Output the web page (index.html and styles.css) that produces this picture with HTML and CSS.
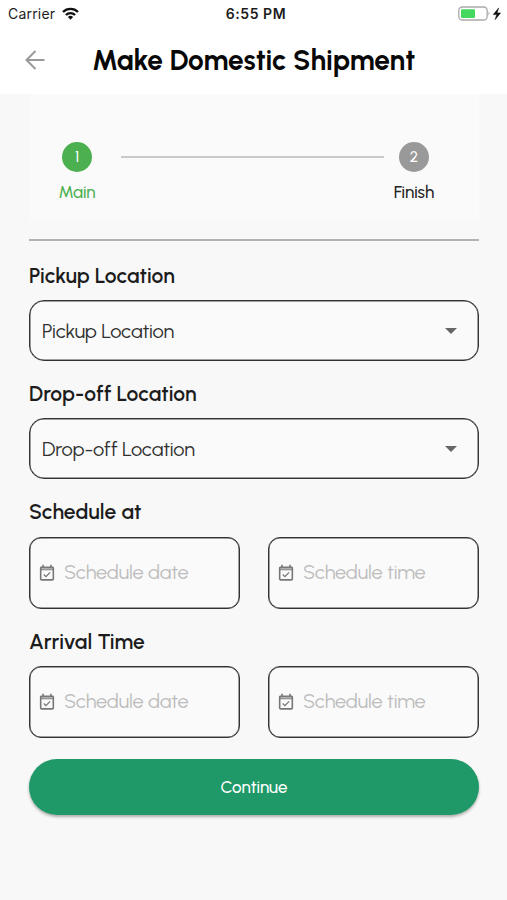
FILE: index.html
```html
<!DOCTYPE html>
<html lang="en">
<head>
<meta charset="utf-8">
<title>Make Domestic Shipment</title>
<link rel="stylesheet" href="styles.css">
</head>
<body>
<svg class="defs" width="0" height="0" aria-hidden="true">
  <symbol id="calendar" viewBox="0 0 24 24"><path fill="currentColor" d="M16.53 11.06 15.47 10l-4.88 4.88-2.12-2.12-1.06 1.06L10.59 17l5.94-5.94zM19 3h-1V1h-2v2H8V1H6v2H5c-1.11 0-1.99.9-1.99 2L3 19c0 1.1.89 2 2 2h14c1.1 0 2-.9 2-2V5c0-1.1-.9-2-2-2zm0 16H5V8h14v11z"/><path fill="#fafafa" fill-opacity=".45" d="M5 5h14v2H5z"/></symbol>
</svg>
<div class="status">
  <div class="carrier"><span>Carrier</span>
    <svg width="17" height="13" viewBox="0 0 17 13"><g fill="none" stroke="#111" stroke-width="2.4"><path d="M1 5a10.6 10.6 0 0 1 15 0"/><path d="M3.9 8a6.6 6.6 0 0 1 9.2 0"/></g><path fill="#111" d="M8.5 12.7 5.9 10.1a3.7 3.7 0 0 1 5.2 0z"/></svg>
  </div>
  <span class="clock">6:55 PM</span>
  <svg class="battery" width="44" height="16" viewBox="0 0 44 16"><rect x=".8" y="1" width="28.4" height="13" rx="3.5" fill="none" stroke="#aaa" stroke-width="1.3"/><rect x="3" y="3.2" width="14" height="8.8" rx="1" fill="#45d85f"/><path d="M30.5 5.3q1.9 2.2 0 4.4z" fill="#aaa"/><path d="M40.7 1.9 35.2 8.600h3.500l-1.600 5.100 5.500-6.800h-3.500z" fill="#111" stroke="#111" stroke-width=".5"/></svg>
</div>
<header class="header">
  <svg class="back" width="20" height="20" viewBox="0 0 20 20" fill="none" stroke="#999" stroke-width="2"><path d="M19.5 10H1.5M10.5 1 1.5 10l9 9"/></svg>
  <h1>Make Domestic Shipment</h1>
</header>
<main>
  <section class="stepper">
    <div class="step active"><span class="dot">1</span><span class="step-name">Main</span></div>
    <div class="connector"></div>
    <div class="step"><span class="dot">2</span><span class="step-name">Finish</span></div>
  </section>
  <form>
    <h2>Pickup Location</h2>
    <div class="select"><span>Pickup Location</span><i class="caret"></i></div>
    <h2>Drop-off Location</h2>
    <div class="select"><span>Drop-off Location</span><i class="caret"></i></div>
    <h2 class="schedule">Schedule at</h2>
    <div class="pair">
      <div class="input"><svg class="cal"><use href="#calendar"/></svg><span>Schedule date</span></div>
      <div class="input"><svg class="cal"><use href="#calendar"/></svg><span>Schedule time</span></div>
    </div>
    <h2 class="arrival">Arrival Time</h2>
    <div class="pair">
      <div class="input"><svg class="cal"><use href="#calendar"/></svg><span>Schedule date</span></div>
      <div class="input"><svg class="cal"><use href="#calendar"/></svg><span>Schedule time</span></div>
    </div>
    <button type="button">Continue</button>
  </form>
</main>
</body>
</html>
```
FILE: styles.css
```css
* { box-sizing: border-box; }
body { margin: 0; height: 900px; background: #f8f8f8; font-family: Urbanist, Lato, sans-serif; color: #222; white-space: nowrap; overflow: hidden; }
.defs { display: block; height: 0; }
svg { flex: none; }
.status { height: 28px; padding: 0 5px 1px 8px; background: #fff; display: grid; grid-template-columns: 1fr auto 1fr; align-items: center; font-family: Inter, sans-serif; font-size: 14px; color: #1c1c1c; }
.carrier { display: flex; align-items: center; gap: 7px; letter-spacing: .2px; }
.clock { font-weight: 600; letter-spacing: .55px; padding-left: 2px; }
.battery { justify-self: end; }
.header { height: 66px; background: #fff; display: flex; align-items: center; padding: 0 25px 2px; }
h1 { margin: 0 0 0 47px; font-size: 28px; line-height: 36px; font-weight: 700; color: #080808; }
main { padding: 0 28px 0 29px; }
.stepper { height: 127px; background: #fafafa; display: flex; padding: 48px 0 0 29px; }
.step { width: 38px; display: flex; flex-direction: column; align-items: center; color: #222; font-weight: 500; }
.dot { width: 30px; height: 30px; border-radius: 50%; background: #999; color: #fff; display: flex; align-items: center; justify-content: center; font-size: 15px; }
.active { color: #4caf50; }
.active .dot { background: #4caf50; }
.step-name { font-size: 17px; line-height: 22px; margin-top: 9px; }
.connector { width: 263px; height: 2px; background: #c9c9c9; margin: 14px 11px 0 25px; }
form { margin-top: 18px; border-top: 2px solid #b2b2b2; padding-top: 23px; }
h2 { margin: 0 0 12px; height: 24px; font-size: 21px; line-height: 24px; font-weight: 600; letter-spacing: .1px; color: #1c1c1c; }
.select { height: 61px; border: 1px solid #333; box-shadow: inset 0 0 0 .5px #444; border-radius: 15px; background: #fafafa; display: flex; align-items: center; justify-content: space-between; padding: 0 21px 0 12px; font-size: 20px; letter-spacing: -.15px; margin-bottom: 21px; color: #303030; }
.caret { border: 6px solid transparent; border-top-color: #666; border-bottom: 0; }
.pair { display: grid; grid-template-columns: 1fr 1fr; gap: 28px; }
.input { height: 72px; border: 1px solid #333; box-shadow: inset 0 0 0 .5px #444; border-radius: 12px; background: #fafafa; display: flex; align-items: center; padding-left: 7px; font-size: 20px; letter-spacing: -.2px; color: #bdbdbd; }
.input span { padding-bottom: 2px; }
.cal { width: 20px; height: 19px; color: #777; margin-right: 7px; }
.schedule { margin-bottom: 13px; }
.arrival { margin: 21px 0 12px; }
button { display: block; width: 100%; height: 56px; margin-top: 21px; border: 0; border-radius: 28px; background: #1f9967; color: #fff; font: 500 17px Urbanist, Lato, sans-serif; box-shadow: 0 2px 3px rgba(0,0,0,.3); }
```
